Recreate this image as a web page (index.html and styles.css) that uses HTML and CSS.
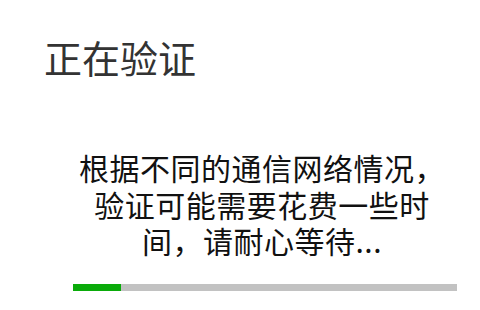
FILE: index.html
```html
<!DOCTYPE html>
<html lang="zh-CN">
<head>
<meta charset="utf-8">
<link rel="stylesheet" href="styles.css">
</head>
<body>
<div class="dialog">
  <h1 class="title">正在验证</h1>
  <p class="message">根据不同的通信网络情况，验证可能需要花费一些时间，请耐心等待...</p>
  <div class="progress"><div class="progress-fill" style="width: 48px"></div></div>
</div>
</body>
</html>
```
FILE: styles.css
```css
html, body {
  margin: 0;
  padding: 0;
  background: #ffffff;
}
.dialog {
  width: 480px;
  height: 310px;
  display: flex;
  flex-direction: column;
  font-family: "Noto Sans CJK SC", "Noto Sans", sans-serif;
  padding-top: 38px;
  box-sizing: border-box;
}
.title {
  margin: 0 0 0 44px;
  font-size: 38px;
  line-height: 38px;
  font-weight: normal;
  color: #333333;
}
.message {
  margin: 73px 0 0 66px;
  width: 392px;
  font-size: 30px;
  line-height: 36.5px;
  letter-spacing: 0.5px;
  text-align: center;
  color: #111111;
}
.progress {
  margin: 25px 0 0 73px;
  width: 384px;
  height: 7px;
  background: #c2c2c2;
  display: flex;
}
.progress-fill {
  height: 100%;
  background: #0aab0a;
}
```
